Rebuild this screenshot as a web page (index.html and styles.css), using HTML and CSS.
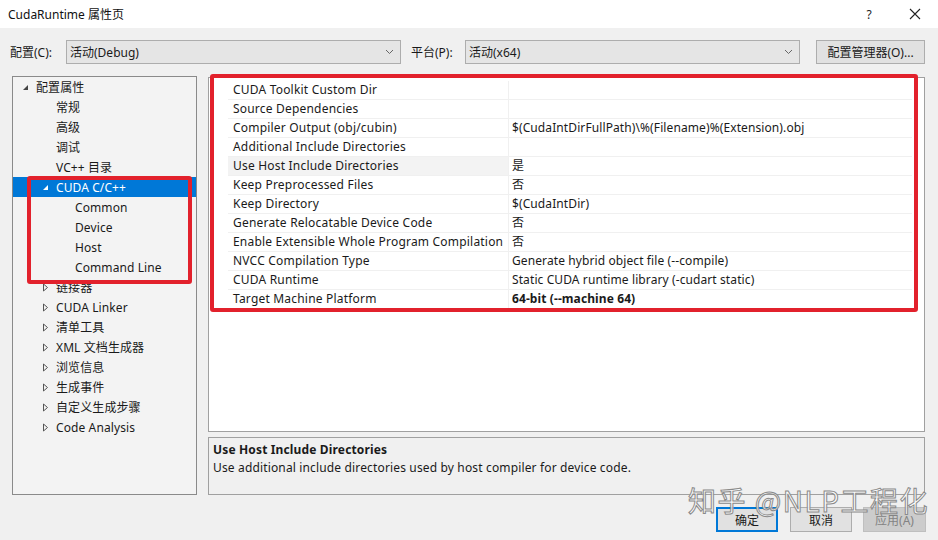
FILE: index.html
```html
<!DOCTYPE html>
<html lang="zh">
<head>
<meta charset="utf-8">
<title>CudaRuntime 属性页</title>
<link rel="stylesheet" href="styles.css">
</head>
<body>
<div class="window">
  <div class="titlebar">
    <span class="title">CudaRuntime 属性页</span>
    <span class="tb-help">?</span>
    <span class="tb-close">
      <svg width="12" height="12" viewBox="0 0 12 12"><path d="M1 1L11 11M11 1L1 11" stroke="#222" stroke-width="1.1" fill="none"/></svg>
    </span>
  </div>
  <div class="body">
    <div class="config-row">
      <span class="lbl lbl-config">配置(C):</span>
      <div class="combo combo-config"><span>活动(Debug)</span><svg class="chev" width="9" height="6" viewBox="0 0 9 6"><path d="M1 1L4.5 4.5L8 1" stroke="#666" fill="none"/></svg></div>
      <span class="lbl lbl-platform">平台(P):</span>
      <div class="combo combo-platform"><span>活动(x64)</span><svg class="chev" width="9" height="6" viewBox="0 0 9 6"><path d="M1 1L4.5 4.5L8 1" stroke="#666" fill="none"/></svg></div>
      <div class="btn btn-mgr">配置管理器(O)...</div>
    </div>
    <div class="content">
      <div class="tree">
        <div class="node lvl0"><svg class="tri" width="7" height="7" viewBox="0 0 7 7"><path d="M6 1V6H1Z" fill="#444"/></svg><span>配置属性</span></div>
        <div class="node lvl1"><span>常规</span></div>
        <div class="node lvl1"><span>高级</span></div>
        <div class="node lvl1"><span>调试</span></div>
        <div class="node lvl1"><span>VC++ 目录</span></div>
        <div class="node lvl1 sel"><svg class="tri" width="7" height="7" viewBox="0 0 7 7"><path d="M6 1V6H1Z" fill="#fff"/></svg><span>CUDA C/C++</span></div>
        <div class="node lvl2"><span>Common</span></div>
        <div class="node lvl2"><span>Device</span></div>
        <div class="node lvl2"><span>Host</span></div>
        <div class="node lvl2"><span>Command Line</span></div>
        <div class="node lvl1"><svg class="tri" width="7" height="9" viewBox="0 0 7 9"><path d="M1.5 1L5.5 4.5L1.5 8Z" fill="none" stroke="#555"/></svg><span>链接器</span></div>
        <div class="node lvl1"><svg class="tri" width="7" height="9" viewBox="0 0 7 9"><path d="M1.5 1L5.5 4.5L1.5 8Z" fill="none" stroke="#555"/></svg><span>CUDA Linker</span></div>
        <div class="node lvl1"><svg class="tri" width="7" height="9" viewBox="0 0 7 9"><path d="M1.5 1L5.5 4.5L1.5 8Z" fill="none" stroke="#555"/></svg><span>清单工具</span></div>
        <div class="node lvl1"><svg class="tri" width="7" height="9" viewBox="0 0 7 9"><path d="M1.5 1L5.5 4.5L1.5 8Z" fill="none" stroke="#555"/></svg><span>XML 文档生成器</span></div>
        <div class="node lvl1"><svg class="tri" width="7" height="9" viewBox="0 0 7 9"><path d="M1.5 1L5.5 4.5L1.5 8Z" fill="none" stroke="#555"/></svg><span>浏览信息</span></div>
        <div class="node lvl1"><svg class="tri" width="7" height="9" viewBox="0 0 7 9"><path d="M1.5 1L5.5 4.5L1.5 8Z" fill="none" stroke="#555"/></svg><span>生成事件</span></div>
        <div class="node lvl1"><svg class="tri" width="7" height="9" viewBox="0 0 7 9"><path d="M1.5 1L5.5 4.5L1.5 8Z" fill="none" stroke="#555"/></svg><span>自定义生成步骤</span></div>
        <div class="node lvl1"><svg class="tri" width="7" height="9" viewBox="0 0 7 9"><path d="M1.5 1L5.5 4.5L1.5 8Z" fill="none" stroke="#555"/></svg><span>Code Analysis</span></div>
        <div class="mark mark-tree"></div>
      </div>
      <div class="right">
        <div class="grid">
          <div class="row"><div class="k">CUDA Toolkit Custom Dir</div><div class="v"></div></div>
          <div class="row"><div class="k">Source Dependencies</div><div class="v"></div></div>
          <div class="row"><div class="k">Compiler Output (obj/cubin)</div><div class="v">$(CudaIntDirFullPath)\%(Filename)%(Extension).obj</div></div>
          <div class="row"><div class="k">Additional Include Directories</div><div class="v"></div></div>
          <div class="row cur"><div class="k">Use Host Include Directories</div><div class="v">是</div></div>
          <div class="row"><div class="k">Keep Preprocessed Files</div><div class="v">否</div></div>
          <div class="row"><div class="k">Keep Directory</div><div class="v">$(CudaIntDir)</div></div>
          <div class="row"><div class="k">Generate Relocatable Device Code</div><div class="v">否</div></div>
          <div class="row"><div class="k">Enable Extensible Whole Program Compilation</div><div class="v">否</div></div>
          <div class="row"><div class="k">NVCC Compilation Type</div><div class="v">Generate hybrid object file (--compile)</div></div>
          <div class="row"><div class="k">CUDA Runtime</div><div class="v">Static CUDA runtime library (-cudart static)</div></div>
          <div class="row"><div class="k">Target Machine Platform</div><div class="v b">64-bit (--machine 64)</div></div>
          <div class="mark mark-grid"></div>
        </div>
        <div class="desc">
          <div class="desc-title">Use Host Include Directories</div>
          <div class="desc-text">Use additional include directories used by host compiler for device code.</div>
        </div>
      </div>
    </div>
    <div class="buttons">
      <div class="btn btn-ok">确定</div>
      <div class="btn btn-cancel">取消</div>
      <div class="btn btn-apply">应用(A)</div>
      <div class="watermark">知乎 @NLP工程化</div>
    </div>
  </div>
</div>
</body>
</html>
```
FILE: styles.css
```css
* { box-sizing: border-box; }
html, body { margin: 0; padding: 0; }
body {
  width: 938px;
  height: 540px;
  overflow: hidden;
  font-family: "Noto Sans", "Noto Sans CJK SC", sans-serif;
  font-size: 12px;
  color: #1a1a1a;
  background: #f0f0f0;
}
.window { width: 938px; height: 540px; display: flex; flex-direction: column; }
.titlebar {
  height: 28px;
  background: #fff;
  display: flex;
  align-items: center;
  padding-left: 8px;
  flex: none;
}
.title { flex: 1; font-size: 12px; color: #111; }
.tb-help { width: 46px; text-align: center; font-size: 12px; color: #222; }
.tb-close { width: 46px; display: flex; justify-content: center; align-items: center; }
.body { flex: 1; background: #f0f0f0; display: flex; flex-direction: column; position: relative; }
.config-row {
  display: flex;
  align-items: center;
  height: 24px;
  margin-top: 12px;
  padding-left: 10px;
}
.lbl { flex: none; }
.lbl-config { width: 56px; }
.lbl-platform { width: 54px; margin-left: 10px; }
.combo {
  height: 24px;
  border: 1px solid #adadad;
  background: #e5e5e5;
  display: flex;
  align-items: center;
  padding: 0 6px 0 3px;
  justify-content: space-between;
}
.combo-config { width: 335px; }
.combo-platform { width: 335px; }
.chev { flex: none; }
.btn {
  height: 24px;
  border: 1px solid #adadad;
  background: #e1e1e1;
  display: flex;
  align-items: center;
  justify-content: center;
}
.btn-mgr { width: 109px; margin-left: 16px; }
.content {
  display: flex;
  margin-top: 12px;
  padding-left: 12px;
  height: 419px;
}
.tree {
  width: 185px;
  height: 419px;
  border: 1px solid #8a8a8a;
  background: #f3f3f3;
  padding-top: 0;
  position: relative;
}
.node {
  height: 20px;
  display: flex;
  align-items: center;
  white-space: nowrap;
  color: #1a1a1a;
  letter-spacing: 0.1px;
}
.node .tri { flex: none; margin-right: 7px; }
.lvl0 { padding-left: 9px; }
.lvl1 { padding-left: 43px; }
.lvl1 .tri { margin-left: -14px; }
.lvl2 { padding-left: 62px; }
.node.sel { background: #0078d7; color: #fff; }
.mark {
  position: absolute;
  border: 4px solid #e2212c;
  border-radius: 3px;
  pointer-events: none;
}
.mark-tree { left: 14px; top: 99px; width: 165px; height: 108px; }
.right {
  margin-left: 11px;
  width: 717px;
  display: flex;
  flex-direction: column;
}
.grid {
  height: 358px;
  border: 1px solid #a0a0a0;
  background: #fff;
  padding-top: 3px;
  padding-left: 19px;
  position: relative;
  margin-top: 1px;
}
.row {
  display: flex;
  height: 19px;
  border-bottom: 1px solid #f0f0f0;
  width: 684px;
  letter-spacing: 0.2px;
}
.k {
  width: 281px;
  padding-left: 5px;
  border-right: 1px solid #f0f0f0;
  white-space: nowrap;
  line-height: 18px;
}
.v {
  flex: 1;
  padding-left: 3px;
  white-space: nowrap;
  line-height: 18px;
  letter-spacing: 0.1px;
}
.v.b { font-weight: bold; }
.row.cur .k { background: #f3f3f3; }
.mark-grid { left: 1px; top: -4px; width: 708px; height: 238px; }
.desc {
  margin-top: 5px;
  height: 58px;
  border: 1px solid #a0a0a0;
  background: #f0f0f0;
  padding: 3px 4px 0;
  letter-spacing: 0.15px;
}
.desc-title { font-weight: bold; line-height: 18px; }
.desc-text { line-height: 18px; }
.buttons {
  display: flex;
  padding-left: 716px;
  margin-top: 12px;
  gap: 12px;
  position: relative;
}
.btn-ok { width: 62px; height: 25px; border: 2px solid #0078d7; }
.btn-cancel { width: 62px; height: 25px; }
.btn-apply { width: 63px; height: 25px; margin-left: -1px; background: #cccccc; border-color: #bfbfbf; color: #838383; }
.watermark {
  position: absolute;
  left: 688px;
  top: -27px;
  font-size: 28px;
  line-height: 40px;
  font-family: "Noto Sans CJK SC", sans-serif;
  color: rgba(255,255,255,0.85);
  -webkit-text-stroke: 1px #8a8a8a;
  letter-spacing: 1.5px;
  white-space: nowrap;
  pointer-events: none;
}
```
